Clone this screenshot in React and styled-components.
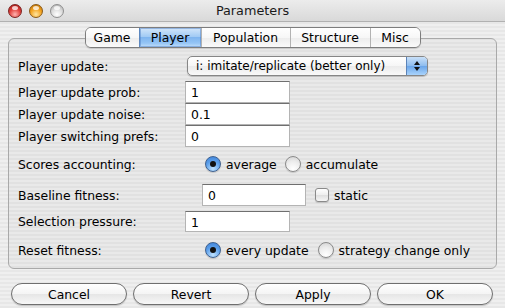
import React from "react";
import styled, { createGlobalStyle } from "styled-components";

const GlobalStyle = createGlobalStyle`
  html, body {
    margin: 0;
    padding: 0;
  }
  body {
    font-family: "DejaVu Sans", "Liberation Sans", sans-serif;
    font-size: 12.4px;
    color: #000;
  }
`;

const tabs = [
  { label: "Game", width: 53 },
  { label: "Player", width: 62, active: true },
  { label: "Population", width: 89 },
  { label: "Structure", width: 80 },
  { label: "Misc", width: 50 },
];

const buttons = ["Cancel", "Revert", "Apply", "OK"];

const Window = styled.div`
  width: 505px;
  height: 308px;
  overflow: hidden;
  display: flex;
  flex-direction: column;
  background: repeating-linear-gradient(
    to bottom,
    #efefef 0,
    #efefef 2px,
    #e7e7e7 2px,
    #e7e7e7 4px
  );
`;

const TitleBar = styled.div`
  height: 22px;
  flex: none;
  box-sizing: border-box;
  display: grid;
  grid-template-columns: 1fr auto 1fr;
  align-items: center;
  background: linear-gradient(#ececec, #d9d9d9);
  border-bottom: 1px solid #b1b1b1;
`;

const Lights = styled.div`
  display: flex;
  gap: 7px;
  padding-left: 8px;
`;

const lightColors = {
  red: ["#ffb4b0", "#e2413c", "#9e1512", "#7b2220"],
  orange: ["#ffe6a0", "#f4a522", "#b86a00", "#8a5a18"],
  gray: ["#ffffff", "#dcdcdc", "#a9a9a9", "#8f8f8f"],
};

const Light = styled.span`
  position: relative;
  width: 14px;
  height: 14px;
  box-sizing: border-box;
  border-radius: 50%;
  border: 1px solid ${({ $tone }) => lightColors[$tone][3]};
  background: radial-gradient(
    circle at 50% 78%,
    ${({ $tone }) => lightColors[$tone][0]} 0%,
    ${({ $tone }) => lightColors[$tone][1]} 50%,
    ${({ $tone }) => lightColors[$tone][2]} 100%
  );

  &::after {
    content: "";
    position: absolute;
    left: 3px;
    top: 1px;
    width: 6px;
    height: 4px;
    border-radius: 50%;
    background: rgba(255, 255, 255, 0.75);
  }
`;

const Title = styled.div`
  font-size: 12.8px;
  color: #1a1a1a;
`;

const Body = styled.div`
  flex: 1;
  display: flex;
  flex-direction: column;
  padding: 5px 8px 0;
`;

const TabStrip = styled.div`
  position: relative;
  z-index: 1;
  align-self: center;
  display: flex;
  height: 21px;
  box-sizing: border-box;
  border: 1px solid #7d7d7d;
  border-radius: 6px;
  overflow: hidden;
  box-shadow: 0 1px 1px rgba(0, 0, 0, 0.15);
  margin-bottom: -10px;
`;

const Tab = styled.div`
  width: ${({ $width }) => $width}px;
  box-sizing: border-box;
  display: flex;
  align-items: center;
  justify-content: center;
  border-left: 1px solid ${({ $active }) => ($active ? "#5d88bf" : "#b2b2b2")};
  background: ${({ $active }) =>
    $active
      ? "linear-gradient(#d3e6fa, #a2cbf4 45%, #7fb5ef 50%, #95c5f5 80%, #c4e0fb)"
      : "linear-gradient(#ffffff, #f7f7f7 50%, #ececec 51%, #fafafa)"};
  box-shadow: ${({ $active }) =>
    $active ? "inset 0 0 0 1px rgba(70, 120, 190, 0.45)" : "none"};

  &:first-child {
    border-left: none;
  }
`;

const GroupBox = styled.div`
  height: 231px;
  box-sizing: border-box;
  border: 1px solid #a9a9a9;
  border-radius: 6px;
  background: rgba(0, 0, 0, 0.025);
  padding: 17px 9px 0;
  display: flex;
  flex-direction: column;
`;

const Row = styled.div`
  display: flex;
  align-items: center;
  height: ${({ $h }) => $h}px;
  margin-top: ${({ $mt }) => $mt || 0}px;
  flex: none;
`;

const Label = styled.div`
  width: 167px;
  flex: none;
  white-space: nowrap;
`;

const Controls = styled.div`
  display: flex;
  align-items: center;
  padding-left: ${({ $indent }) => $indent || 0}px;
  gap: ${({ $gap }) => $gap || 0}px;
  height: 100%;
`;

const Popup = styled.div`
  width: 241px;
  height: 20px;
  box-sizing: border-box;
  display: flex;
  border: 1px solid #868686;
  border-radius: 5px;
  overflow: hidden;
  box-shadow: 0 1px 1px rgba(0, 0, 0, 0.2);
  background: linear-gradient(#ffffff, #f6f6f6 50%, #ebebeb 51%, #f9f9f9);
`;

const PopupText = styled.div`
  flex: 1;
  display: flex;
  align-items: center;
  padding-left: 8px;
  font-size: 12px;
`;

const PopupArrows = styled.div`
  width: 20px;
  flex: none;
  display: flex;
  align-items: center;
  justify-content: center;
  border-left: 1px solid #5b83b8;
  background: linear-gradient(#c9e0f8, #8fbdef 48%, #6ba6ea 52%, #a9d3fb);
`;

const Field = styled.input`
  width: ${({ $width }) => $width || 105}px;
  height: ${({ $height }) => $height || 22}px;
  box-sizing: border-box;
  margin: 0;
  padding: 1px 0 0 5px;
  font-family: "DejaVu Sans", "Liberation Sans", sans-serif;
  font-size: 12.4px;
  color: #000;
  background: #fff;
  border: 1px solid #b4b4b4;
  border-top-color: #6f6f6f;
  outline: none;
`;

const Stack = styled.div`
  display: flex;
  flex-direction: column;
`;

const Option = styled.label`
  display: flex;
  align-items: center;
  gap: 5px;
  white-space: nowrap;
`;

const Radio = styled.span`
  width: 16px;
  height: 16px;
  box-sizing: border-box;
  border-radius: 50%;
  display: flex;
  align-items: center;
  justify-content: center;
  border: 1px solid ${({ $checked }) => ($checked ? "#3f618f" : "#8a8a8a")};
  background: ${({ $checked }) =>
    $checked
      ? "radial-gradient(circle at 50% 85%, #bfe2ff 0%, #5c9fea 55%, #3b7fd6 100%)"
      : "radial-gradient(circle at 50% 85%, #ffffff 0%, #ececec 55%, #d0d0d0 100%)"};
  box-shadow: 0 1px 1px rgba(0, 0, 0, 0.15);

  &::after {
    content: "";
    display: ${({ $checked }) => ($checked ? "block" : "none")};
    width: 6px;
    height: 6px;
    border-radius: 50%;
    background: #111;
  }
`;

const Checkbox = styled.span`
  width: 14px;
  height: 14px;
  box-sizing: border-box;
  border: 1px solid #8a8a8a;
  border-radius: 3px;
  background: linear-gradient(#ffffff, #eeeeee 50%, #dedede 51%, #f6f6f6);
  box-shadow: 0 1px 1px rgba(0, 0, 0, 0.15);
`;

const ButtonRow = styled.div`
  display: flex;
  gap: 6px;
  padding: 14px 4px 0 3px;
`;

const Button = styled.button`
  width: 120px;
  height: 22px;
  margin: 0;
  padding: 0;
  border: 1px solid #6f6f6f;
  border-radius: 11px;
  font-family: "DejaVu Sans", "Liberation Sans", sans-serif;
  font-size: 12.4px;
  color: #000;
  background: linear-gradient(#ffffff, #f4f4f4 50%, #e6e6e6 51%, #f7f7f7);
  box-shadow: 0 1px 1px rgba(0, 0, 0, 0.18);
`;

const Arrows = () => (
  <svg width="8" height="12" viewBox="0 0 8 12">
    <path d="M4 1 L7 5 L1 5 Z" fill="#111" />
    <path d="M1 7 L7 7 L4 11 Z" fill="#111" />
  </svg>
);

export default function App() {
  return (
    <>
      <GlobalStyle />
      <Window>
        <TitleBar>
          <Lights>
            <Light $tone="red" />
            <Light $tone="orange" />
            <Light $tone="gray" />
          </Lights>
          <Title>Parameters</Title>
          <div />
        </TitleBar>
        <Body>
          <TabStrip>
            {tabs.map(t => (
              <Tab key={t.label} $width={t.width} $active={t.active}>
                {t.label}
              </Tab>
            ))}
          </TabStrip>
          <GroupBox>
            <Row $h={20}>
              <Label>Player update:</Label>
              <Controls $indent={2}>
                <Popup>
                  <PopupText>i: imitate/replicate (better only)</PopupText>
                  <PopupArrows>
                    <Arrows />
                  </PopupArrows>
                </Popup>
              </Controls>
            </Row>
            <Stack>
              <Row $h={22} $mt={5}>
                <Label>Player update prob:</Label>
                <Field readOnly value="1" />
              </Row>
              <Row $h={22}>
                <Label>Player update noise:</Label>
                <Field readOnly value="0.1" />
              </Row>
              <Row $h={22}>
                <Label>Player switching prefs:</Label>
                <Field readOnly value="0" />
              </Row>
            </Stack>
            <Row $h={20} $mt={7}>
              <Label>Scores accounting:</Label>
              <Controls $indent={20} $gap={8}>
                <Option>
                  <Radio $checked />
                  average
                </Option>
                <Option>
                  <Radio />
                  accumulate
                </Option>
              </Controls>
            </Row>
            <Row $h={22} $mt={10}>
              <Label>Baseline fitness:</Label>
              <Controls $indent={17} $gap={9}>
                <Field readOnly value="0" $width={104} />
                <Option>
                  <Checkbox />
                  static
                </Option>
              </Controls>
            </Row>
            <Row $h={21} $mt={5}>
              <Label>Selection pressure:</Label>
              <Field readOnly value="1" $height={21} />
            </Row>
            <Row $h={20} $mt={8}>
              <Label>Reset fitness:</Label>
              <Controls $indent={20} $gap={9}>
                <Option>
                  <Radio $checked />
                  every update
                </Option>
                <Option>
                  <Radio />
                  strategy change only
                </Option>
              </Controls>
            </Row>
          </GroupBox>
          <ButtonRow>
            {buttons.map(b => (
              <Button key={b}>{b}</Button>
            ))}
          </ButtonRow>
        </Body>
      </Window>
    </>
  );
}
